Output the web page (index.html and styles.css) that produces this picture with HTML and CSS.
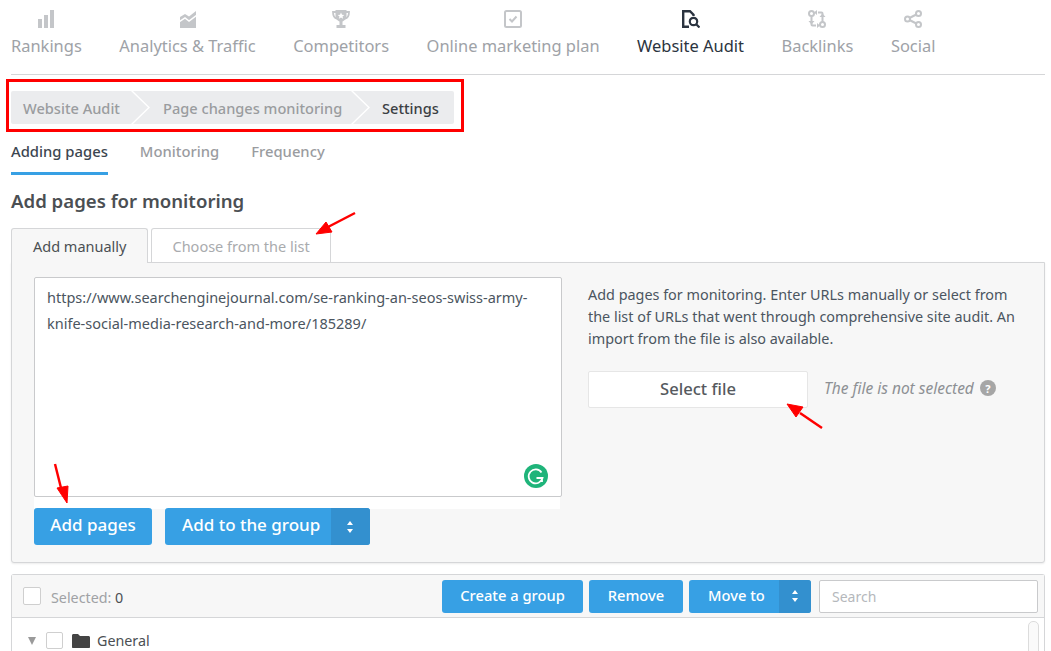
FILE: index.html
```html
<!DOCTYPE html>
<html lang="en">
<head>
<meta charset="utf-8">
<title>Website Audit</title>
<link rel="stylesheet" href="styles.css">
</head>
<body>
<nav class="topnav">
  <a class="nav-item"><svg class="nav-icon" viewBox="0 0 18 18"><path fill="currentColor" d="M1 9h4v9H1zM7 5h4v13H7zM13 0h4v18h-4z"/></svg>Rankings</a>
  <a class="nav-item"><svg class="nav-icon" viewBox="0 0 18 18"><path fill="currentColor" d="M1 7l5-3 4 2.500L17 1v17H1z"/><path fill="none" stroke="#fff" stroke-width="1.500" d="M0 12l6-4 4 3 8-6"/></svg>Analytics &amp; Traffic</a>
  <a class="nav-item"><svg class="nav-icon" viewBox="0 0 18 18"><path fill="none" stroke="currentColor" stroke-width="1.800" d="M4 2H1c0 4 1 6 4 6.500M14 2h3c0 4-1 6-4 6.500"/><path fill="currentColor" d="M3.500 0h11v6c0 3-2.500 5-4 5.500V15h3v3h-9v-3h3v-3.500C6 11 3.500 9 3.500 6z"/><path fill="#fff" d="M9 2.500l1 2.200 2.300.2-1.800 1.500.6 2.300L9 7.500l-2.100 1.200.6-2.300-1.800-1.500 2.300-.2z"/></svg>Competitors</a>
  <a class="nav-item"><svg class="nav-icon" viewBox="0 0 18 18"><rect x="1" y="1" width="16" height="16" rx="1.500" fill="none" stroke="currentColor" stroke-width="2"/><path fill="none" stroke="currentColor" stroke-width="2" d="M5.500 9l2.500 2.500 4.500-5"/></svg>Online marketing plan</a>
  <a class="nav-item is-active"><svg class="nav-icon" viewBox="0 0 18 18"><path fill="none" stroke="currentColor" stroke-width="2.400" d="M7 16.800H1.200V1.200h6.800l3.500 3.500V6"/><circle cx="11.500" cy="11.500" r="3.700" fill="none" stroke="currentColor" stroke-width="2.200"/><path stroke="currentColor" stroke-width="2.200" d="M14.500 14.500l3 3"/></svg>Website Audit</a>
  <a class="nav-item"><svg class="nav-icon" viewBox="0 0 18 18"><g fill="none" stroke="currentColor" stroke-width="2"><circle cx="3.500" cy="3.500" r="2.500"/><circle cx="14.500" cy="14.500" r="2.500"/><path d="M3.500 6v6.500M14.500 12V5.500"/><path d="M10 2.500h3.500a1 1 0 0 1 1 1V6M8 15.500H4.500a1 1 0 0 1-1-1V12"/></g><path fill="currentColor" d="M9 0v5l-3-2.500zM9 13v5l3-2.500zM0.500 11h6l-3 3.500zM11.500 7h6l-3-3.500z"/></svg>Backlinks</a>
  <a class="nav-item"><svg class="nav-icon" viewBox="0 0 18 18"><g fill="none" stroke="currentColor" stroke-width="2"><circle cx="3.500" cy="9" r="2.500"/><circle cx="14.500" cy="3.500" r="2.500"/><circle cx="14.500" cy="14.500" r="2.500"/><path d="M5.500 8l6.800-3.500M5.500 10l6.800 3.500"/></g></svg>Social</a>
</nav>

<div class="crumbs-box">
  <div class="crumbs">
    <span class="crumb crumb-first">Website Audit</span>
    <span class="crumb crumb-mid">Page changes monitoring</span>
    <span class="crumb is-current">Settings</span>
  </div>
</div>

<div class="subtabs">
  <a class="subtab is-active">Adding pages</a>
  <a class="subtab">Monitoring</a>
  <a class="subtab">Frequency</a>
</div>

<h1 class="title">Add pages for monitoring</h1>

<div class="tabs">
  <a class="tab is-active">Add manually</a>
  <a class="tab">Choose from the list</a>
</div>

<section class="panel">
  <div class="panel-left">
    <div class="textarea">https://www.searchenginejournal.com/se-ranking-an-seos-swiss-army-knife-social-media-research-and-more/185289/
      <svg class="grammarly" viewBox="0 0 24 24"><circle cx="12" cy="12" r="12" fill="#1fb47a"/><path fill="none" stroke="#fff" stroke-width="1.800" d="M17.500 8.500A7 7 0 1 0 18.500 14H12.500M18 14v4"/></svg>
    </div>
    <div class="actions">
      <button class="btn btn-lg">Add pages</button>
      <div class="split split-lg"><span class="split-label">Add to the group</span><span class="split-caret"><svg viewBox="0 0 8 14" class="caret"><path fill="#fff" d="M4 1l3 4H1zM4 13l3-4H1z"/></svg></span></div>
    </div>
  </div>
  <div class="panel-right">
    <p class="help">Add pages for monitoring. Enter URLs manually or select from the list of URLs that went through comprehensive site audit. An import from the file is also available.</p>
    <div class="file-row">
      <button class="file-btn">Select file</button>
      <span class="file-note">The file is not selected</span>
      <span class="q">?</span>
    </div>
  </div>
</section>

<section class="list">
  <div class="list-head">
    <span class="check"></span>
    <span class="selected">Selected: <b>0</b></span>
    <div class="list-tools">
      <button class="btn btn-create">Create a group</button>
      <button class="btn btn-remove">Remove</button>
      <div class="split split-move"><span class="split-label">Move to</span><span class="split-caret"><svg viewBox="0 0 8 14" class="caret"><path fill="#fff" d="M4 1l3 4H1zM4 13l3-4H1z"/></svg></span></div>
      <div class="search">Search</div>
    </div>
  </div>
  <div class="list-body">
    <span class="tri"></span>
    <span class="check check-row"></span>
    <svg class="folder" viewBox="0 0 18 14"><path fill="#444" d="M0 1.500C0 .7.600 0 1.500 0h4.500l2 2h8.500c.8 0 1.500.7 1.500 1.500V13c0 .6-.5 1-1 1H1c-.6 0-1-.4-1-1z"/></svg>
    <span class="group-name">General</span>
    <span class="scrollbar"></span>
  </div>
</section>

<svg class="arrows" viewBox="0 0 1051 651">
  <g fill="#f00" stroke="#f00">
    <path stroke-width="2.500" d="M355 213L328 227"/><path d="M316 234l10-12 6 10z"/>
    <path stroke-width="2.500" d="M822 428L800 413"/><path d="M787 404l16 3-7 10z"/>
    <path stroke-width="2.500" d="M55 464L61 488"/><path d="M67 503l-10-15 11-2z"/>
  </g>
</svg>
</body>
</html>
```
FILE: styles.css
```css
* { box-sizing: border-box; }
html, body { margin: 0; height: 651px; overflow: hidden; }
body {
  position: relative;
  width: 1051px;
  padding: 0 6px 0 11px;
  background: #fff;
  font-family: "Noto Sans", "Open Sans", sans-serif;
  color: #3c4650;
}
button { font-family: inherit; border: 0; cursor: pointer; }

.topnav {
  display: flex;
  gap: 37.500px;
  height: 75px;
  padding-top: 10px;
  border-bottom: 1px solid #d5d6d8;
}
.nav-item {
  display: flex;
  flex-direction: column;
  align-items: center;
  font-size: 16.450px;
  line-height: 24px;
  color: #9ea2a7;
}
.nav-icon { width: 18px; height: 18px; margin-bottom: 6px; color: #c4c6c9; display: block; }
.nav-item.is-active { color: #2b3440; }
.nav-item.is-active .nav-icon { color: #2b3440; }

.crumbs-box {
  display: flex;
  width: 458px;
  height: 53px;
  margin: 4px 0 0 -5px;
  padding: 9px 7px 5px 2px;
  border: 3px solid #f00;
}
.crumbs { display: flex; width: 443px; height: 33px; background: #ebecee; border-radius: 2px; }
.crumb {
  position: relative;
  display: flex;
  align-items: center;
  font-size: 14.600px;
  font-weight: 500;
  color: #9a9c9f;
  white-space: nowrap;
}
.crumb-first { width: 139px; padding-left: 12px; }
.crumb-mid { width: 220px; padding-left: 13px; }
.crumb-first::after, .crumb-mid::after {
  content: "";
  position: absolute;
  right: 0;
  top: 0;
  width: 19px;
  height: 33px;
  background: #fff;
  clip-path: polygon(0 0, 2px 0, 100% 50%, 2px 100%, 0 100%, calc(100% - 2px) 50%);
}
.crumb.is-current { color: #3b3f44; padding-left: 12px; }

.subtabs { display: flex; gap: 32px; margin-top: 3px; height: 40px; }
.subtab { display: block; height: 40px; padding-top: 5px; font-size: 14.800px; line-height: 22px; font-weight: 500; color: #9a9c9f; }
.subtab.is-active { color: #3c4650; border-bottom: 3px solid #37a0e4; }

.title { margin: 12px 0 0; font-size: 18.600px; line-height: 28px; font-weight: 600; color: #4b4f53; }

.tabs { display: flex; gap: 3px; margin-top: 13px; height: 34px; }
.tab {
  display: block;
  height: 34px;
  padding: 5px 20px 0 21px;
  font-size: 14.500px;
  line-height: 24px;
  color: #a9abae;
  background: #fff;
  border: 1px solid #d5d6d8;
  border-bottom: 0;
  border-radius: 3px 3px 0 0;
}
.tab.is-active {
  position: relative;
  z-index: 1;
  height: 35px;
  color: #4b4f53;
  background: #f7f7f7;
}

.panel {
  display: flex;
  height: 301px;
  padding: 14px 0 0 22px;
  background: #f7f7f7;
  border: 1px solid #d5d6d8;
  border-radius: 0 0 3px 3px;
  box-shadow: 0 1px 2px rgba(0, 0, 0, .08);
}
.panel-left { width: 528px; }
.textarea {
  position: relative;
  height: 220px;
  padding: 6px 12px;
  background: #fff;
  border: 1px solid #c9cacc;
  border-radius: 2px;
  font-size: 14.500px;
  line-height: 26px;
  color: #4b5560;
}
.grammarly { position: absolute; right: 13px; bottom: 8px; width: 24px; height: 24px; }
.actions {
  display: flex;
  gap: 13px;
  padding-top: 11px;
  width: 526px;
  background: linear-gradient(#fff 12px, transparent 12px);
}
.btn, .split {
  background: #37a0e4;
  color: #fff;
  border-radius: 3px;
  font-size: 14.700px;
  font-weight: 500;
  height: 33px;
}
.btn { padding: 0 0 2px; }
.btn-lg { height: 37px; width: 118px; font-size: 17px; padding-bottom: 4px; }
.btn-create { width: 141px; }
.btn-remove { width: 94px; }
.split { display: flex; align-items: center; overflow: hidden; }
.split-move { width: 122px; justify-content: space-between; }
.split-label { padding: 0 0 2px 19px; }
.split-caret { display: flex; align-items: center; justify-content: center; align-self: stretch; width: 32px; background: #3390cf; }
.split-lg { height: 37px; width: 205px; font-size: 17px; justify-content: space-between; }
.split-lg .split-label { padding: 0 0 4px 17px; }
.split-lg .split-caret { width: 39px; padding-right: 2px; }
.caret { width: 8px; height: 14px; }

.panel-right { margin-left: 26px; width: 430px; padding-top: 7px; }
.help { margin: 0; font-size: 14.400px; line-height: 22px; color: #4b5560; }
.file-row { display: flex; align-items: center; margin-top: 21px; }
.file-btn {
  flex: none;
  width: 220px;
  height: 37px;
  padding-bottom: 3px;
  background: #fff;
  border: 1px solid #e6e6e6;
  border-radius: 2px;
  font-size: 16.600px;
  font-weight: 500;
  color: #55595e;
}
.file-note { margin: 0 0 4px 16px; font-size: 15.500px; font-style: italic; color: #8d9094; white-space: nowrap; }
.q {
  display: flex;
  align-items: center;
  justify-content: center;
  width: 16px;
  height: 16px;
  margin: 0 0 3px 6px;
  border-radius: 50%;
  background: #a6a6a6;
  color: #fff;
  font-size: 11px;
  font-weight: 700;
}

.list { margin-top: 11px; border: 1px solid #d5d6d8; border-bottom: 0; border-radius: 3px 3px 0 0; }
.list-head {
  display: flex;
  align-items: center;
  height: 43px;
  padding: 0 6px 0 11px;
  background: #f7f7f7;
  border-bottom: 1px solid #d5d6d8;
}
.check { display: block; width: 18px; height: 18px; background: #fff; border: 1px solid #cfcfcf; border-radius: 2px; }
.selected { margin: 2px 0 0 10px; font-size: 14.300px; color: #a0a2a5; }
.selected b { font-weight: 400; color: #4b4f53; }
.list-tools { display: flex; align-items: center; gap: 6px; margin-left: auto; }
.search {
  width: 219px;
  height: 33px;
  padding: 0 12px;
  margin-left: 2px;
  background: #fff;
  border: 1px solid #c9cacc;
  border-radius: 2px;
  font-size: 14px;
  line-height: 32px;
  color: #b5b8bc;
}
.list-body { position: relative; display: flex; align-items: center; height: 45px; padding-left: 16px; }
.tri { width: 0; height: 0; border-left: 4px solid transparent; border-right: 4px solid transparent; border-top: 8px solid #9a9a9a; }
.check-row { margin-left: 10px; width: 17px; height: 17px; }
.folder { width: 18px; height: 14px; margin-left: 9px; }
.group-name { margin-left: 7px; font-size: 14.300px; color: #4b4f53; }
.scrollbar {
  position: absolute;
  right: 5px;
  top: 3px;
  width: 11px;
  height: 40px;
  border: 1px solid #dcdcdc;
  border-radius: 5px;
  background: #fafafa;
}

.arrows { position: absolute; left: 0; top: 0; width: 1051px; height: 651px; pointer-events: none; z-index: 5; }
```
